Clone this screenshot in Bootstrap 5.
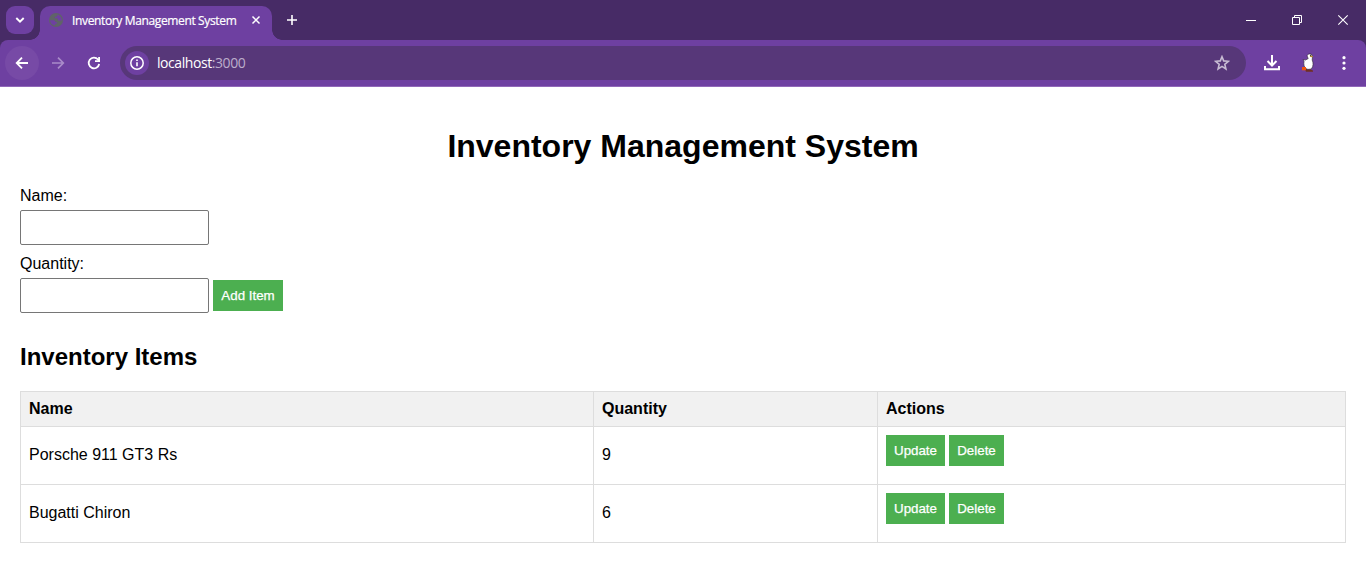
<!DOCTYPE html>
<html lang="en">
<head>
<meta charset="utf-8">
<meta name="viewport" content="width=device-width, initial-scale=1">
<title>Inventory Management System</title>
<link rel="stylesheet" href="https://cdn.jsdelivr.net/npm/bootstrap@5.3.0/dist/css/bootstrap.min.css">
<style>
body{font-family:"Liberation Sans",Arial,sans-serif;font-size:16px;color:#000;line-height:18px;background:#fff;overflow:hidden}
svg{display:block;flex:none;fill:none}
.tabstrip{height:40px;background:#472b66;padding-left:6px}
.search-tabs{width:28px;height:28px;margin-top:6px;border-radius:9px;background:#6e40a1}
.tab{width:232px;height:34px;margin:6px 0 0 6px;background:#6e40a1;border-radius:10px 10px 0 0;position:relative;padding:0 9px 6px 8px}
.tab::before,.tab::after{content:"";position:absolute;bottom:0;width:10px;height:10px}
.tab::before{left:-10px;background:radial-gradient(circle at 0 0,transparent 9.5px,#6e40a1 10px)}
.tab::after{right:-10px;background:radial-gradient(circle at 100% 0,transparent 9.5px,#6e40a1 10px)}
.tab-title{font:12px/16px "Open Sans",sans-serif;letter-spacing:-.36px;color:#fff;margin:1px 0 0 8px;white-space:nowrap;-webkit-text-stroke:.2px #fff}
.toolbar-wrap{background:#472b66}
.toolbar{height:47px;background:#6e40a1;border-bottom:1px solid #9068b8;border-radius:8px 8px 0 0;padding-left:5px;padding-right:14px}
.round{width:34px;height:34px}
.back{background:#774aa6;border-radius:50%}
.omnibox{height:34px;background:#573779;border-radius:17px;margin-left:18px;padding:0 16px 0 5px}
.info{width:24px;height:24px;background:#6e40a1;border-radius:50%}
.url{font:14px/20px "Open Sans",sans-serif;color:#fff;margin-left:8px;letter-spacing:-.43px}
.url span{color:#bcaecb}
.page{padding:41px 20px 0}
h1{font-size:32px;line-height:37px;font-weight:700;margin:0 0 22px}
h2{font-size:24px;line-height:27px;font-weight:700;margin:30px 0 21px}
.field-label{display:block;margin-bottom:5px;line-height:18px}
.field{width:189px;height:35px;border:1px solid #767676;border-radius:2px;padding:8px;background:#fff;font-size:13.333px;display:block}
.act{background:#4caf50;color:#fff;border:0;border-radius:0;font-size:13.333px;line-height:15px;padding:8px 0;height:31px;width:59px;-webkit-text-stroke:.25px #fff}
.act.del{width:55px}
.act.add{width:70px}
.items{table-layout:fixed;margin:0;border-collapse:collapse;color:#000;width:1326px;border-color:#ddd}
.items>:not(caption)>*>*{padding:8px;border:1px solid #ddd;color:#000;box-shadow:none}
.items thead th{background:#f1f1f1;height:35px;line-height:18px}
.items tbody td{height:58px;vertical-align:middle;background:#fff;padding-bottom:10px}
.items tbody td:last-child{vertical-align:top}
</style>
</head>
<body>
<header>
  <div class="tabstrip d-flex">
    <div class="search-tabs d-flex align-items-center justify-content-center"><svg width="10" height="8"><path d="M1.300 2 5 5.700 8.700 2" stroke="#fff" stroke-width="1.900"/></svg></div>
    <div class="tab d-flex align-items-center">
      <svg width="16" height="16" viewBox="0 0 16 16"><circle cx="8" cy="8" r="7" fill="#5f6368"/><path d="M2 8.300h3.500c1.300 0 1.800.8 1.800 1.700h1.500v1.800H7.200v1.800c-2.800-.2-5-2.300-5.200-5.300zM9.300 2.400v1c0 .9-.7 1.400-1.500 1.400H6.900v1.500h1.800c.9 0 1.200.5 1.200 1.300v.8h3.900C13.900 5.700 12 3 9.300 2.400z" fill="#6e40a1"/></svg>
      <span class="tab-title">Inventory Management System</span>
      <svg class="ms-auto" width="14" height="14"><path d="m3.500 3.500 7 7m0-7-7 7" stroke="#fff" stroke-width="1.500"/></svg>
    </div>
    <svg style="margin:12px 0 0 12px" width="16" height="16"><path d="M8 3v10M3 8h10" stroke="#fff" stroke-width="1.600"/></svg>
    <div class="ms-auto d-flex">
      <svg width="46" height="40"><path d="M18 20.500h10" stroke="#fff"/></svg>
      <svg width="46" height="40"><path d="M18.500 17.500h7v7h-7zM20.500 17v-1.500h7v7H26" stroke="#fff"/></svg>
      <svg width="46" height="40"><path d="m18.300 15.300 9.400 9.400m0-9.400-9.400 9.400" stroke="#fff" stroke-width="1.100"/></svg>
    </div>
  </div>
  <div class="toolbar-wrap">
  <div class="toolbar d-flex align-items-center">
    <div class="round back d-flex align-items-center justify-content-center"><svg width="16" height="16"><path d="M14 8H3M8 2.700 2.700 8 8 13.300" stroke="#fff" stroke-width="1.800"/></svg></div>
    <svg style="margin-left:11px" width="16" height="16"><path d="M2 8h11M8 2.700 13.300 8 8 13.300" stroke="#a98bc9" stroke-width="1.700"/></svg>
    <svg style="margin-left:20px" width="16" height="16"><path d="M13.200 9A5.300 5.300 0 1 1 12 4.500L13 5.500" stroke="#fff" stroke-width="1.800"/><path d="M14 2v5H9V5.300h3.200V2z" fill="#fff"/></svg>
    <div class="omnibox flex-grow-1 d-flex align-items-center">
      <div class="info d-flex align-items-center justify-content-center"><svg width="16" height="16"><circle cx="8" cy="8" r="6.200" stroke="#fff" stroke-width="1.500"/><path d="M8 7.300v4M8 4.500v1.600" stroke="#fff" stroke-width="1.600"/></svg></div>
      <div class="url">localhost<span>:3000</span></div>
      <svg class="ms-auto" width="16" height="16"><path d="m8 1.700 1.700 4.200 4.700.4-3.600 3 1.100 4.600L8 11.400l-3.900 2.500 1.100-4.600-3.600-3 4.700-.4z" stroke="#c8bcd3" stroke-width="1.600"/></svg>
    </div>
    <svg style="margin-left:16px" width="20" height="20"><path d="M10 2v10M5.500 8 10 12.500 14.500 8M3 13v3.200h14V13" stroke="#fff" stroke-width="2"/></svg>
    <svg style="margin-left:18px" width="18" height="20"><path d="M4.500 15.500h6l1 1.500 1.500.5v1.300H6z" fill="#702f24"/><path d="M7 2.800C7.600 1.400 8.800.8 10 .9c1.700.1 2.600 1.300 2.500 2.900l-.3 3.200c1.300 2.600 1.200 6.700-.6 8.500-1.300 1.100-4.400 1.100-5.600.2-2.100-1.600-2.500-5-2-7.300l-1-2 2.300.7 2.900-1.500z" fill="#fff" stroke="#3b2f42" stroke-width=".7"/><path d="M9.800 2.400 13 3l-.6 1.300-2.300-.4z" fill="#b78b35"/><path d="M10 2.300h1.400" stroke="#222"/><path d="M2 14h4v3.300H2z" fill="#f0570e"/></svg>
    <svg style="margin-left:18px" width="16" height="18"><g fill="#fff"><circle cx="8" cy="3.700" r="1.600"/><circle cx="8" cy="9" r="1.600"/><circle cx="8" cy="14.300" r="1.600"/></g></svg>
  </div>
  </div>
</header>
<main class="page">
  <h1 class="text-center">Inventory Management System</h1>
  <form>
    <label class="field-label" for="name">Name:</label>
    <input class="field" id="name" type="text">
    <label class="field-label" for="quantity" style="margin-top:10px">Quantity:</label>
    <div class="d-flex align-items-center gap-1">
      <input class="field" id="quantity" type="text">
      <button class="btn act add" type="button">Add Item</button>
    </div>
  </form>
  <h2>Inventory Items</h2>
  <table class="table items">
    <colgroup><col style="width:573px"><col style="width:284px"><col></colgroup>
    <thead><tr><th>Name</th><th>Quantity</th><th>Actions</th></tr></thead>
    <tbody>
      <tr><td>Porsche 911 GT3 Rs</td><td>9</td><td><div class="d-flex gap-1"><button class="btn act" type="button">Update</button><button class="btn act del" type="button">Delete</button></div></td></tr>
      <tr><td>Bugatti Chiron</td><td>6</td><td><div class="d-flex gap-1"><button class="btn act" type="button">Update</button><button class="btn act del" type="button">Delete</button></div></td></tr>
    </tbody>
  </table>
</main>
<script src="https://cdn.jsdelivr.net/npm/bootstrap@5.3.0/dist/js/bootstrap.bundle.min.js"></script>
</body>
</html>
